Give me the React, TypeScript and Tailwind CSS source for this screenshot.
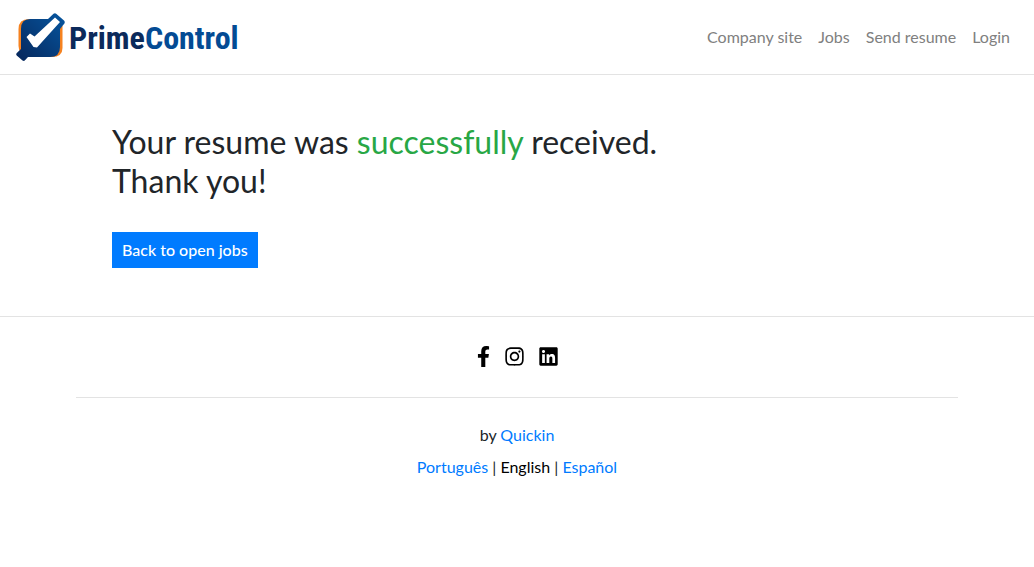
import React from "react";
import { FaFacebookF, FaInstagram, FaLinkedin } from "react-icons/fa";

const navLinks = ["Company site", "Jobs", "Send resume", "Login"];

const socialLinks = [
  { label: "Facebook", Icon: FaFacebookF, size: "h-[21px] w-[13px]" },
  { label: "Instagram", Icon: FaInstagram, size: "h-[21px] w-[19px]" },
  { label: "LinkedIn", Icon: FaLinkedin, size: "h-[21px] w-[19px]" },
];

function Logo() {
  return (
    <svg className="h-12 w-[222px]" viewBox="0 0 222 48" role="img" aria-label="PrimeControl">
      <defs>
        <linearGradient id="mark" x1="0" y1="1" x2="1" y2="0">
          <stop offset="0" stopColor="#06265a" />
          <stop offset="1" stopColor="#0656a0" />
        </linearGradient>
      </defs>
      <path d="M13 6H24V12L12 41Q2.500 41 2.500 33V16Q2.500 6 13 6Z" fill="#f58220" />
      <path d="M32 44H36Q46.500 44 46.500 35V13H36Z" fill="#f58220" />
      <path
        d="M14 6H32L37.500 .8Q39 -.4 40.500 1L48 7.500Q49.500 9 48 11L44 16V34Q44 44 34 44H12L9 47.300Q8 48.500 6.500 47.500L.7 42.500Q-.4 41.300 .8 40L5 36V16Q5 6 14 6Z"
        fill="url(#mark)"
      />
      <path d="M10.500 24L14 20.500L18.500 23.500L39 4.500L44 9L21 34.500L17.500 34Z" fill="#fff" />
      <text x="53" y="36" fontSize="32" fontWeight="700" className="font-['Roboto_Condensed',sans-serif]">
        <tspan fill="#0b2a5b">Prime</tspan>
        <tspan fill="#034b94">Control</tspan>
      </text>
    </svg>
  );
}

export default function App() {
  return (
    <div className="min-h-screen bg-white font-[Lato,sans-serif] text-base text-[#212529]">
      <header className="flex items-center justify-between border-b border-[#e3e3e3] px-4 py-[13px]">
        <a href="#home">
          <Logo />
        </a>
        <nav className="flex gap-4 px-2">
          {navLinks.map((label) => (
            <a key={label} href="#nav" className="text-[#808080]">
              {label}
            </a>
          ))}
        </nav>
      </header>

      <main className="mx-auto max-w-[810px] pt-[47px] pb-12">
        <h1 className="text-[32px] leading-[39px]">
          Your resume was <span className="text-[#28a745]">successfully</span> received.
          <br />
          Thank you!
        </h1>
        <a
          href="#jobs"
          className="mt-8 inline-flex h-9 items-center bg-[#007bff] px-2.5 font-medium text-white"
        >
          Back to open jobs
        </a>
      </main>

      <footer className="border-t border-[#e3e3e3] text-center">
        <div className="mx-auto max-w-[882px]">
          <div className="flex h-[81px] items-center justify-center gap-[15px] border-b border-[#e3e3e3] pb-0.5 text-black">
            {socialLinks.map(({ label, Icon, size }) => (
              <a key={label} href="#social" aria-label={label}>
                <Icon className={size} />
              </a>
            ))}
          </div>
          <div className="flex flex-col gap-2 py-[25px]">
            <p>
              by{" "}
              <a href="#quickin" className="text-[#007bff]">
                Quickin
              </a>
            </p>
            <p>
              <a href="#pt" className="text-[#007bff]">Português</a> |{" "}
              <a href="#en" className="text-black">English</a> |{" "}
              <a href="#es" className="text-[#007bff]">Español</a>
            </p>
          </div>
        </div>
      </footer>
    </div>
  );
}
